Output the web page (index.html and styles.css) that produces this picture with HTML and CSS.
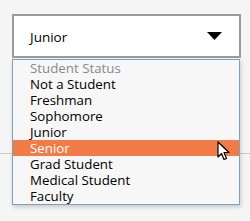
FILE: index.html
```html
<!DOCTYPE html>
<html>
<head>
<meta charset="utf-8">
<link rel="stylesheet" href="styles.css">
</head>
<body>
<div class="page">
  <div class="select">
    <span class="value">Junior</span>
    <svg class="arrow" width="15" height="8" viewBox="0 0 15 8"><polygon points="0,0 15,0 7.5,8" fill="#000"/></svg>
  </div>
  <div class="rule"></div>
  <ul class="menu">
    <li class="opt placeholder">Student Status</li>
    <li class="opt">Not a Student</li>
    <li class="opt">Freshman</li>
    <li class="opt">Sophomore</li>
    <li class="opt">Junior</li>
    <li class="opt active">Senior</li>
    <li class="opt">Grad Student</li>
    <li class="opt">Medical Student</li>
    <li class="opt">Faculty</li>
  </ul>
  <svg class="cursor" width="13" height="20" viewBox="0 0 13 20"><path d="M1 1 L1 16 L4.5 12.5 L7 18.5 L9.5 17.5 L7 11.5 L12 11.5 Z" fill="#fff" stroke="#000" stroke-width="1.2" stroke-linejoin="round"/></svg>
</div>
</body>
</html>
```
FILE: styles.css
```css
html, body {
  margin: 0;
  padding: 0;
  background: #f5f5f5;
}
.page {
  position: relative;
  width: 250px;
  height: 221px;
  padding-top: 14px;
  box-sizing: border-box;
  font-family: "Open Sans", "Noto Sans", sans-serif;
  font-size: 13.3px;
}
.select {
  margin-left: 12px;
  width: 229px;
  height: 44px;
  box-sizing: border-box;
  border: 2px solid #9b9b9b;
  background: #fff;
  display: flex;
  align-items: center;
  justify-content: space-between;
  padding: 0 17px 0 16px;
}
.value {
  color: #000;
  font-size: 13.5px;
  padding-top: 1px;
}
.arrow {
  display: block;
  margin-bottom: 1px;
}
.rule {
  margin-top: 95px;
  height: 1px;
  background: #c8c8c8;
}
.menu {
  position: absolute;
  left: 12px;
  top: 59px;
  width: 228px;
  box-sizing: border-box;
  margin: 0;
  padding: 0;
  list-style: none;
  background: #f7f7f7;
  border: 1px solid #7f9fc2;
  box-shadow: 1px 2px 4px rgba(0,0,0,0.18);
}
.opt {
  height: 16px;
  line-height: 16px;
  padding-left: 17px;
  color: #000;
  white-space: nowrap;
  overflow: hidden;
}
.placeholder {
  color: #8a8a8a;
}
.active {
  background: #f27c47;
  color: #fff;
}
.cursor {
  position: absolute;
  left: 217px;
  top: 141px;
}
```
